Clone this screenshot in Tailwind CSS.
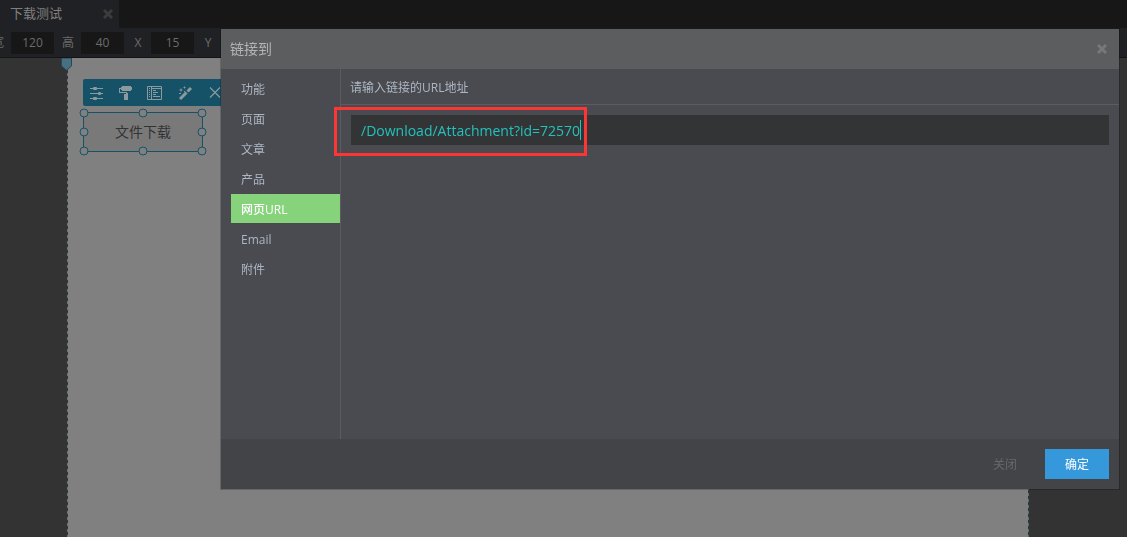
<!DOCTYPE html>
<html lang="zh-CN">
<head>
<meta charset="utf-8">
<meta name="viewport" content="width=device-width, initial-scale=1">
<title>链接到</title>
<script src="https://cdn.jsdelivr.net/npm/@tailwindcss/browser@4"></script>
</head>
<body class="flex h-screen flex-col overflow-hidden bg-[#333333] font-['Open_Sans','Noto_Sans_CJK_SC',sans-serif] text-xs text-[#808080]">
  <header class="shrink-0">
    <div class="flex h-7 bg-[#171717]">
      <div class="flex w-[119px] items-center justify-between bg-[#202124] pr-1.5 pl-2.5 text-[13px]">
        <span>下载测试</span>
        <button type="button" aria-label="关闭标签" class="text-[#3c3c3d]">
          <svg class="size-[10px]" viewBox="0 0 10 10" fill="none" stroke="currentColor" stroke-width="3"><path d="M1 1l8 8M9 1l-8 8"/></svg>
        </button>
      </div>
    </div>
    <form class="-ml-4 flex h-[30px] items-center border-b border-[#141415] bg-[#202124] text-[#6b6b6b]">
      <label for="w" class="w-[27px] pl-px text-center">宽</label>
      <input id="w" value="120" class="h-[22px] w-[43px] bg-[#171717] text-center">
      <label for="h" class="w-[27px] pl-px text-center">高</label>
      <input id="h" value="40" class="h-[22px] w-[43px] bg-[#171717] text-center">
      <label for="x" class="w-[27px] pl-px text-center">X</label>
      <input id="x" value="15" class="h-[22px] w-[43px] bg-[#171717] text-center">
      <label for="y" class="w-[27px] pl-px text-center">Y</label>
      <input id="y" value="" class="h-[22px] w-[43px] bg-[#171717] text-center">
    </form>
  </header>

  <main class="flex flex-1">
    <section class="relative mr-[98px] ml-[67px] flex flex-1 bg-[#808080]">
      <div class="w-px bg-[repeating-linear-gradient(#333333_0_3px,#66757a_3px_6px)]"></div>
      <div class="flex flex-1 flex-col items-start pt-[21px] pl-[15px]">
        <div class="flex h-[27px] items-center gap-[14px] rounded-xs bg-[#155167] px-1 text-[#8c999d]">
          <button type="button" aria-label="设置"><svg class="size-4" viewBox="0 0 16 16" fill="currentColor"><path d="M3 3h13v1H3zM3 8h13v1H3zM3 13h13v1H3z"/><rect x="6" y="2" width="4" height="3" rx="1"/><rect x="11" y="7" width="3" height="3" rx="1"/><rect x="6" y="12" width="4" height="3" rx="1"/></svg></button>
          <button type="button" aria-label="样式"><svg class="size-4" viewBox="0 0 16 16" fill="currentColor"><path d="M5 1h9v1h1v3h-1v1H5V5H4V4H3v3h7v1h1v7H7V9h2V8H2V3h2V2h1z"/></svg></button>
          <button type="button" aria-label="布局"><svg class="size-4" viewBox="0 0 16 16" fill="none" stroke="currentColor"><path d="M.5 1.500h14v13H.5zM4.500 1.500v13M2 3.500h1M2 5.500h1M2 7.500h1M2 9.500h1M2 11.500h1M5 3.500h9M6 5.500h3M6 7.500h5M6 9.500h3M6 11.500h7"/></svg></button>
          <button type="button" aria-label="动画"><svg class="size-4" viewBox="0 0 16 16" fill="none" stroke="currentColor"><path d="M3 14L9.500 7.500M10.500 6.500L14 3" stroke-width="3"/><path d="M4 3.500v3M2.500 5h3M7.500 1.500v2M6.500 2.500h2M2 8.500h2M7 6.500h1"/></svg></button>
          <button type="button" aria-label="移除"><svg class="size-4" viewBox="0 0 16 16" fill="none" stroke="currentColor" stroke-width="1.200"><path d="M3 2.500l10 10M13 2.500l-10 10"/></svg></button>
        </div>
        <div class="relative mt-1.5 h-10 w-[120px] border border-[#165369] bg-[#797979]">
          <button type="button" class="size-full text-sm text-[#333333]">文件下载</button>
          <i class="absolute top-0 left-0 size-[9px] -translate-1/2 rounded-full border border-[#165369] bg-[#808080]"></i>
          <i class="absolute top-0 left-1/2 size-[9px] -translate-1/2 rounded-full border border-[#165369] bg-[#808080]"></i>
          <i class="absolute top-0 left-full size-[9px] -translate-1/2 rounded-full border border-[#165369] bg-[#808080]"></i>
          <i class="absolute top-1/2 left-0 size-[9px] -translate-1/2 rounded-full border border-[#165369] bg-[#808080]"></i>
          <i class="absolute top-1/2 left-full size-[9px] -translate-1/2 rounded-full border border-[#165369] bg-[#808080]"></i>
          <i class="absolute top-full left-0 size-[9px] -translate-1/2 rounded-full border border-[#165369] bg-[#808080]"></i>
          <i class="absolute top-full left-1/2 size-[9px] -translate-1/2 rounded-full border border-[#165369] bg-[#808080]"></i>
          <i class="absolute top-full left-full size-[9px] -translate-1/2 rounded-full border border-[#165369] bg-[#808080]"></i>
        </div>
      </div>
      <div class="w-px bg-[repeating-linear-gradient(#333333_0_3px,#4d7583_3px_6px)]"></div>
      <svg class="absolute top-0 -left-1.5 h-[13px] w-[11px]" viewBox="0 0 11 13"><path d="M.5 0v8L5.500 12.300 10.500 8V0z" fill="#477183" stroke="#2c4651"/></svg>
    </section>
  </main>

  <div class="fixed inset-0 pt-[29px] pr-2 pl-[221px]">
    <div role="dialog" aria-labelledby="title" class="relative bg-[#4a4b50] text-[#adb6c2] shadow-[0_0_0_1px_rgba(0,0,0,0.2)]">
      <div class="flex h-10 items-center justify-between bg-[#5c5d5f] pr-3 pl-[9px]">
        <h1 id="title" class="text-sm text-[#b4b4b5]">链接到</h1>
        <button type="button" aria-label="关闭" class="text-[#77787a]">
          <svg class="size-[10px]" viewBox="0 0 10 10" fill="none" stroke="currentColor" stroke-width="3"><path d="M1 1l8 8M9 1l-8 8"/></svg>
        </button>
      </div>
      <div class="flex min-h-[370px]">
        <nav class="flex w-[120px] flex-col gap-px border-r border-[#5b5c60] pt-[5px] pl-2.5">
          <a href="#" class="h-[29px] pl-2.5 leading-[31px]">功能</a>
          <a href="#" class="h-[29px] pl-2.5 leading-[31px]">页面</a>
          <a href="#" class="h-[29px] pl-2.5 leading-[31px]">文章</a>
          <a href="#" class="h-[29px] pl-2.5 leading-[31px]">产品</a>
          <a href="#" aria-current="page" class="h-[29px] bg-[#86d37c] pl-2.5 leading-[31px] font-medium text-white">网页URL</a>
          <a href="#" class="h-[29px] pl-2.5 leading-[31px]">Email</a>
          <a href="#" class="h-[29px] pl-2.5 leading-[31px]">附件</a>
        </nav>
        <div class="flex-1">
          <label for="url" class="block h-9 border-b border-[#5b5c60] pl-[9px] leading-[37px]">请输入链接的URL地址</label>
          <div class="relative p-2.5">
            <input id="url" value="/Download/Attachment?id=72570" class="block h-[30px] w-full bg-[#333436] px-2.5 text-sm text-[#23c2bd] outline-none">
            <span class="absolute top-[15px] left-[239px] h-5 w-px bg-[#23c2bd]"></span>
            <div class="pointer-events-none absolute top-0.5 -left-[7px] h-[49px] w-[253px] border-3 border-[#fc3535]"></div>
          </div>
        </div>
      </div>
      <div class="flex h-[50px] items-center justify-end gap-4 bg-[#434447] pr-2.5">
        <button type="button" class="h-[30px] px-3 leading-8 text-[#66686b]">关闭</button>
        <button type="button" class="h-[30px] w-16 bg-[#3598db] leading-8 text-white">确定</button>
      </div>
    </div>
  </div>
</body>
</html>
